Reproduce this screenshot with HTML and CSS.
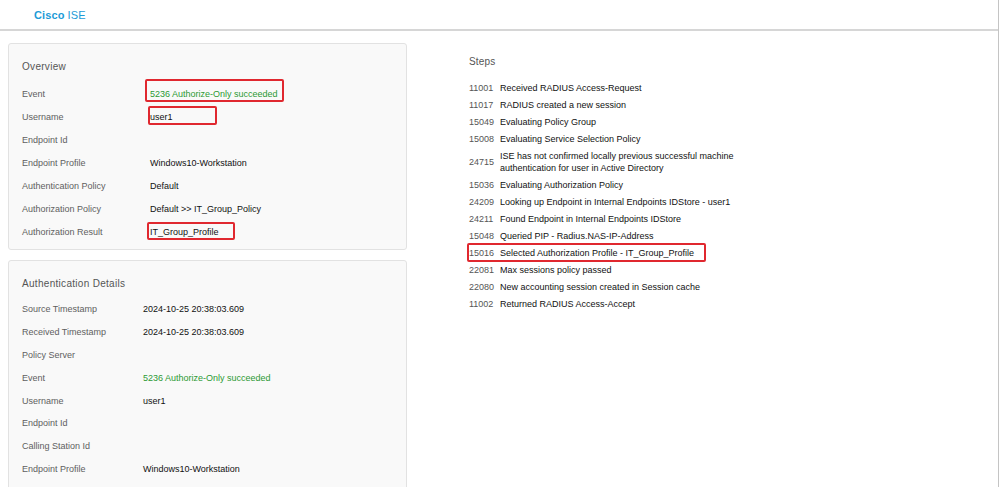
FILE: index.html
```html
<!DOCTYPE html>
<html lang="en">
<head>
<meta charset="utf-8">
<title>Cisco ISE - Live Log Details</title>
<link rel="stylesheet" href="styles.css">
</head>
<body>
<div class="page">
  <header class="topbar">
    <span class="brand"><b>Cisco</b> ISE</span>
  </header>
  <main class="content">
    <section class="left">
      <div class="card">
        <h2 class="card-title">Overview</h2>
        <dl class="kv kv-overview">
          <dt>Event</dt>
          <dd class="ok"><span class="annot annot-event"></span>5236 Authorize-Only succeeded</dd>
          <dt>Username</dt>
          <dd><span class="annot annot-user"></span>user1</dd>
          <dt>Endpoint Id</dt>
          <dd></dd>
          <dt>Endpoint Profile</dt>
          <dd>Windows10-Workstation</dd>
          <dt>Authentication Policy</dt>
          <dd>Default</dd>
          <dt>Authorization Policy</dt>
          <dd>Default &gt;&gt; IT_Group_Policy</dd>
          <dt>Authorization Result</dt>
          <dd><span class="annot annot-result"></span>IT_Group_Profile</dd>
        </dl>
      </div>
      <div class="card card-auth">
        <h2 class="card-title">Authentication Details</h2>
        <dl class="kv kv-auth">
          <dt>Source Timestamp</dt>
          <dd>2024-10-25 20:38:03.609</dd>
          <dt>Received Timestamp</dt>
          <dd>2024-10-25 20:38:03.609</dd>
          <dt>Policy Server</dt>
          <dd></dd>
          <dt>Event</dt>
          <dd class="ok">5236 Authorize-Only succeeded</dd>
          <dt>Username</dt>
          <dd>user1</dd>
          <dt>Endpoint Id</dt>
          <dd></dd>
          <dt>Calling Station Id</dt>
          <dd></dd>
          <dt>Endpoint Profile</dt>
          <dd>Windows10-Workstation</dd>
        </dl>
      </div>
    </section>
    <section class="steps">
      <h2 class="steps-title">Steps</h2>
      <ol class="step-list">
        <li><span class="code">11001</span><span class="desc">Received RADIUS Access-Request</span></li>
        <li><span class="code">11017</span><span class="desc">RADIUS created a new session</span></li>
        <li><span class="code">15049</span><span class="desc">Evaluating Policy Group</span></li>
        <li><span class="code">15008</span><span class="desc">Evaluating Service Selection Policy</span></li>
        <li><span class="code">24715</span><span class="desc">ISE has not confirmed locally previous successful machine<br>authentication for user in Active Directory</span></li>
        <li><span class="code">15036</span><span class="desc">Evaluating Authorization Policy</span></li>
        <li><span class="code">24209</span><span class="desc">Looking up Endpoint in Internal Endpoints IDStore - user1</span></li>
        <li><span class="code">24211</span><span class="desc">Found Endpoint in Internal Endpoints IDStore</span></li>
        <li><span class="code">15048</span><span class="desc">Queried PIP - Radius.NAS-IP-Address</span></li>
        <li class="marked"><span class="annot annot-step"></span><span class="code">15016</span><span class="desc">Selected Authorization Profile - IT_Group_Profile</span></li>
        <li><span class="code">22081</span><span class="desc">Max sessions policy passed</span></li>
        <li><span class="code">22080</span><span class="desc">New accounting session created in Session cache</span></li>
        <li><span class="code">11002</span><span class="desc">Returned RADIUS Access-Accept</span></li>
      </ol>
    </section>
  </main>
</div>
</body>
</html>
```
FILE: styles.css
```css
html, body {
  margin: 0;
  padding: 0;
  height: 100%;
  overflow: hidden;
  background: #ffffff;
}

body {
  font-family: "Liberation Sans", Arial, sans-serif;
  font-size: 9px;
  color: #1a1a1a;
}

.page {
  width: 999px;
  min-height: 487px;
  box-sizing: border-box;
  border-right: 1px solid #c4c4c4;
}

.topbar {
  height: 29px;
  border-bottom: 2px solid #d6d6d6;
  display: flex;
  align-items: center;
  padding-left: 34px;
}

.brand {
  font-size: 11px;
  color: #1d9bd7;
  letter-spacing: 0.1px;
}

.brand b {
  font-weight: bold;
}

.content {
  display: flex;
  align-items: flex-start;
  padding-top: 12px;
}

.left {
  width: 399px;
  margin-left: 8px;
  display: flex;
  flex-direction: column;
  gap: 10px;
}

.card {
  background: #f9f9f9;
  border: 1px solid #e2e2e2;
  border-radius: 3px;
  padding: 14px 13px 6px;
}

.card-auth {
  padding-bottom: 30px;
}

.card-title,
.steps-title {
  margin: 0 0 6px;
  font-size: 10px;
  font-weight: normal;
  line-height: 18px;
  color: #555555;
  letter-spacing: 0.3px;
}

.kv {
  display: grid;
  grid-auto-rows: 23px;
  margin: 0;
  align-items: center;
}

.kv-overview {
  grid-template-columns: 128px 1fr;
}

.kv-auth {
  grid-template-columns: 121px 1fr;
  grid-auto-rows: 22.8px;
}

.card-auth .card-title {
  margin-bottom: 5px;
}

.kv dt {
  color: #606060;
}

.kv dd {
  margin: 0;
  color: #111111;
  position: relative;
  white-space: nowrap;
  min-height: 10px;
}

.kv dd.ok {
  color: #2c9a34;
}

.annot {
  position: absolute;
  border: 2px solid #e0282f;
  border-radius: 2px;
  box-sizing: border-box;
  pointer-events: none;
}

.annot-event {
  left: -5px;
  top: -9.5px;
  width: 139px;
  height: 23px;
}

.annot-user {
  left: -2px;
  top: -5.5px;
  width: 69px;
  height: 19px;
}

.annot-result {
  left: -3px;
  top: -4.5px;
  width: 88px;
  height: 18px;
}

.steps {
  margin-left: 62px;
  padding-top: 10px;
}

.steps-title {
  margin-bottom: 8px;
  letter-spacing: 0.2px;
}

.step-list {
  list-style: none;
  margin: 0;
  padding: 0;
}

.step-list li {
  display: flex;
  align-items: center;
  line-height: 12px;
  padding: 2.5px 0;
  position: relative;
}

.step-list .code {
  width: 31px;
  flex: none;
  color: #555555;
}

.step-list .desc {
  color: #111111;
}

.annot-step {
  left: -2px;
  top: -1.5px;
  width: 239px;
  height: 19px;
}
```
